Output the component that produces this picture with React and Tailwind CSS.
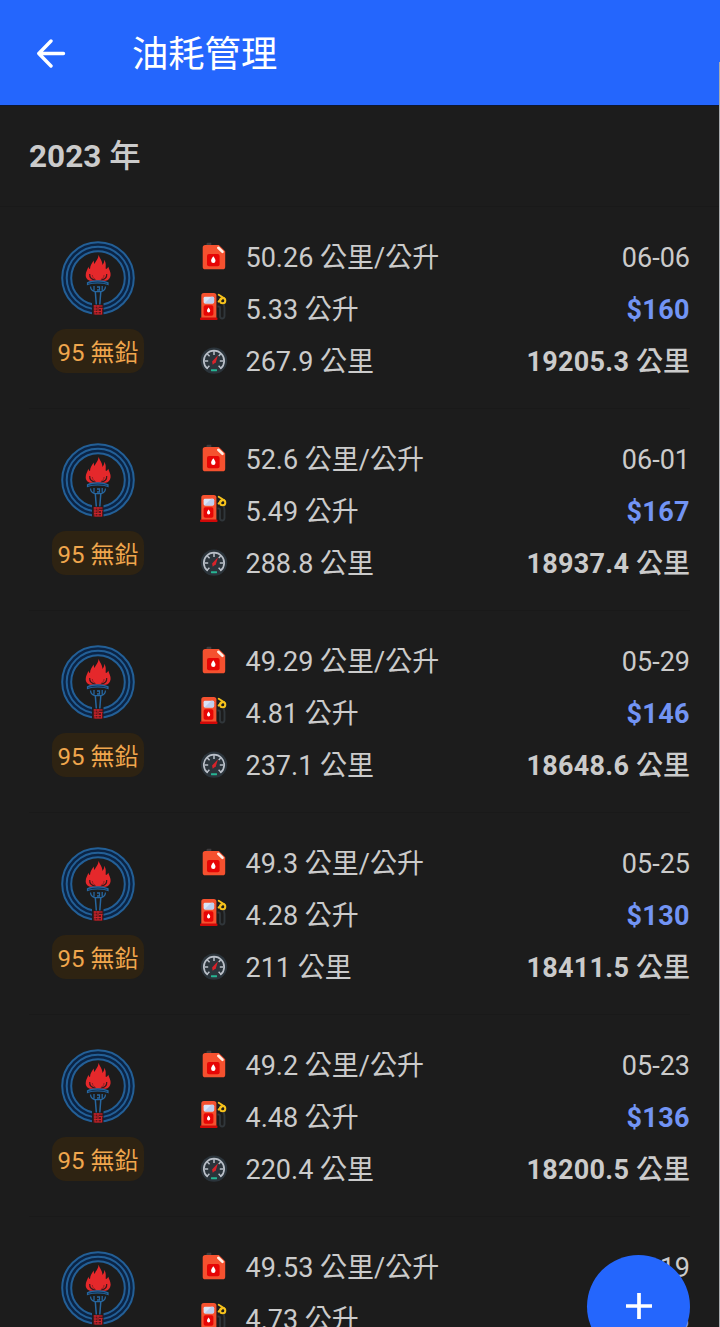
import React from 'react';

const records = [
  { date: '06-06', efficiency: '50.26', liters: '5.33', distance: '267.9', price: 160, odometer: '19205.3' },
  { date: '06-01', efficiency: '52.6', liters: '5.49', distance: '288.8', price: 167, odometer: '18937.4' },
  { date: '05-29', efficiency: '49.29', liters: '4.81', distance: '237.1', price: 146, odometer: '18648.6' },
  { date: '05-25', efficiency: '49.3', liters: '4.28', distance: '211', price: 130, odometer: '18411.5' },
  { date: '05-23', efficiency: '49.2', liters: '4.48', distance: '220.4', price: 136, odometer: '18200.5' },
  { date: '05-19', efficiency: '49.53', liters: '4.73', distance: '234.3', price: 143, odometer: '17980.1' },
];

const StationLogo = () => (
  <svg width="74" height="74" viewBox="0 0 74 74" fill="none">
    <circle cx="37" cy="37" r="31.3" stroke="#0b2445" strokeWidth="10" />
    <circle cx="37" cy="37" r="35.8" stroke="#235f96" strokeWidth="2" />
    <circle cx="37" cy="37" r="31.3" stroke="#235f96" strokeWidth="2" />
    <circle cx="37" cy="37" r="26.8" stroke="#235f96" strokeWidth="2" />
    <rect x="31" y="60" width="11.5" height="14" fill="#1c1c1c" />
    {/* flame */}
    <path
      d="M37.6 13.7c.8 3.300 3.600 5.300 3.900 10.300 1.200-1.600 2-3 1.700-5.200 2.300 3.400 1.300 6 1.600 9.200 1.200-.3 2-1 2.500-2.300.9 3 2.600 5.300 2.300 8.500-.3 3-2.300 5.300-5 5.600H30c-3 0-5.300-2.500-5.300-5.500 0-3.300 1.600-5.600 2.700-8.600.2 1.300.8 2 1.600 2.300.1-3.500 1.900-6 3.700-8.500.1 1.500.3 2.600.9 3.500 1.200-3.500 3.700-5 4-9.300z"
      fill="#e5282b"
    />
    <path d="M28.700 33c-.3 3.500 2.300 5.600 5.800 6M45.700 33c.3 3.500-2.300 5.600-5.800 6" stroke="#3a1a1c" strokeWidth="1.200" />
    <path d="M31.300 34c.2 2 1.200 3.500 3 4.300M43.100 34c-.2 2-1.200 3.500-3 4.300" stroke="#8d2023" strokeWidth="1" />
    {/* torch */}
    <path d="M26.500 41.700c5-2.500 15.500-2.500 20.500 0v1.800c-5-2-15.500-2-20.500 0z" stroke="#2767a0" strokeWidth="1.200" fill="#0e3156" />
    <path d="M29.500 45.500c.2 2.500 2 4.500 4.500 5.200h6c2.500-.7 4.300-2.700 4.500-5.200M33 45v4.500M36 46h2.500v3H36M41.200 45v4.500" stroke="#2767a0" strokeWidth="1.300" />
    <path d="M34.300 50.500l1 13M39.800 50.500l-1 13" stroke="#2767a0" strokeWidth="1.500" />
    {/* seal */}
    <rect x="32.300" y="64" width="9.500" height="9.700" fill="#5c171b" />
    <path d="M32.800 65h8.500M33 68h3M38 67.500h3.500M33 70.500h8M33.500 73h7.500M34 64v9.500M37 64v9.500M40.500 67v6.500" stroke="#c9242b" strokeWidth="1.100" />
  </svg>
);

const CanisterIcon = () => (
  <svg width="30" height="30" viewBox="0 0 30 30">
    <path d="M7.500 4V2q0-1.200 1.200-1.200h3.600V4z" fill="#3e3a3c" />
    <path d="M6.300 3h13.500l6.400 6.200v15.500q0 2.600-2.600 2.600H6.300q-2.600 0-2.600-2.600V5.600Q3.700 3 6.300 3z" fill="#f5512f" />
    <path d="M19.300 5.800l4.200 4" stroke="#fff0e6" strokeWidth="2.600" strokeLinecap="round" />
    <rect x="8" y="12" width="12.600" height="12.300" rx="2" fill="#e60505" />
    <path d="M14.300 14.200c1.400 1.900 2.200 3.200 2.200 4.500a2.200 2.300 0 0 1-4.400 0c0-1.300.8-2.600 2.200-4.500z" fill="#fff" />
  </svg>
);

const PumpIcon = () => (
  <svg width="30" height="30" viewBox="0 2 30 30" className="overflow-visible">
    <path d="M18.500 14.500h1.200q1.300 0 1.300 1.800v7.700q0 2.500 2.200 2.500t2.300-2.500V16L24.800 12" stroke="#30363a" strokeWidth="1.900" fill="none" />
    <path d="M19.700 2.800l5.500 3.500M19.600 9.500l3.400-3" stroke="#f6c21c" strokeWidth="1.900" fill="none" strokeLinecap="round" />
    <circle cx="23.700" cy="8.700" r="2.600" stroke="#f6c21c" strokeWidth="2" fill="none" />
    <path d="M2.300 27V3.500Q2.300 1 4.800 1h10Q17.400 1 17.400 3.500V27z" fill="#f5512f" />
    <rect x="1" y="25.600" width="17.500" height="2.400" rx=".8" fill="#d00808" />
    <rect x="4.600" y="4.800" width="10.500" height="6.600" rx="1.400" fill="#dbe5f8" />
    <path d="M5.300 11.400l7-6.600h1.400q1.400 0 1.400 1.400v3.800q0 1.400-1.400 1.400z" fill="#bfcfee" />
    <rect x="4.600" y="13.200" width="9.800" height="10.500" rx="1.800" fill="#e60505" />
    <path d="M9.600 15.600c1 1.400 1.600 2.300 1.600 3.200a1.600 1.700 0 0 1-3.200 0c0-.9.6-1.800 1.600-3.200z" fill="#fff" />
  </svg>
);

const GaugeIcon = () => (
  <svg width="30" height="30" viewBox="0 0 30 30" fill="none">
    <circle cx="15" cy="14.600" r="13.200" fill="#2b343b" />
    <path d="M8.200 22.400a10.200 10.200 0 1 1 13.600 0" stroke="#b9bfc8" strokeWidth="1.700" strokeLinecap="round" />
    <path d="M15 5v4M8.300 8l2.300 2.300M21.700 8l-2 2M5.500 15h3.700M24.500 15h-3.700M8.300 22l2.100-2.200M21.700 22l-2.100-2.200" stroke="#b9bfc8" strokeWidth="1.500" />
    <path d="M19 9.200l-2.200 7-3.100 2.600-.6-3.200z" fill="#d8232a" />
    <rect x="12" y="23.200" width="6" height="2" rx=".4" fill="#27b594" />
  </svg>
);

const RecordRow = ({ record }) => (
  <div className="ml-[29px] mr-[30px] flex h-[202px] border-b border-[#191919] pt-[24px]">
    <div className="flex w-[138px] flex-col items-center pt-[10px]">
      <StationLogo />
      <span className="mt-[14px] flex h-[44px] w-[92px] items-center justify-center rounded-[14px] bg-[#2e2312] pt-[3px] text-[24px] whitespace-nowrap text-[#f0a64d]">
        95 無鉛
      </span>
    </div>
    <div className="ml-[32px] flex-1 text-[27px] leading-[52px] text-[#cbcbcb]">
      <div className="flex h-[52px] items-center">
        <CanisterIcon />
        <span className="ml-[16.500px] pt-px">{record.efficiency} 公里/公升</span>
        <span className="ml-auto pt-px">{record.date}</span>
      </div>
      <div className="flex h-[52px] items-center">
        <PumpIcon />
        <span className="ml-[16.500px] pt-px">{record.liters} 公升</span>
        <span className="ml-auto pt-px font-bold tracking-[0.4px] text-[#7294f4]">${record.price}</span>
      </div>
      <div className="flex h-[52px] items-center">
        <GaugeIcon />
        <span className="ml-[16.500px] pt-px">{record.distance} 公里</span>
        <span className="ml-auto pt-px font-bold">
          <span className="tracking-[0.3px]">{record.odometer}</span> <span className="font-medium">公里</span>
        </span>
      </div>
    </div>
  </div>
);

const App = () => {
  return (
    <div className="relative h-[1327px] w-[720px] overflow-hidden bg-[#1c1c1c] font-[Roboto,'Noto_Sans_CJK_TC',sans-serif]">
      <header className="flex h-[106px] items-center border-b border-[#0d1733] bg-[#2466fd] pt-px pl-[36px] text-white">
        <svg width="30" height="30" viewBox="0 0 30 30" fill="none" stroke="currentColor" strokeWidth="3.400" strokeLinecap="round" strokeLinejoin="round">
          <path d="M27.500 15.500H3M15 3L2.800 15.500 15 28" />
        </svg>
        <h1 className="ml-[66px] pt-[5px] text-[36.300px] font-normal">油耗管理</h1>
      </header>

      <h2 className="flex h-[101px] items-center border-b border-[#191919] pt-[2px] pl-[29px] text-[31.500px] font-bold text-[#cbcbcb]">
        <span className="whitespace-pre">2023 </span>
        <span className="font-medium">年</span>
      </h2>

      <main>
        {records.map((record) => (
          <RecordRow key={record.date} record={record} />
        ))}
      </main>

      {/* scrollbar edge */}
      <div className="absolute top-[62px] right-0 h-[1265px] w-px bg-[#a9abae]" />

      <button className="absolute top-[1254.500px] left-[587px] flex h-[103px] w-[103px] items-center justify-center rounded-full bg-[#2466fd]">
        <svg width="26" height="26" viewBox="0 0 26 26" stroke="#fff" strokeWidth="3.700">
          <path d="M13 0v26M0 13h26" />
        </svg>
      </button>
    </div>
  );
};

export default App;
